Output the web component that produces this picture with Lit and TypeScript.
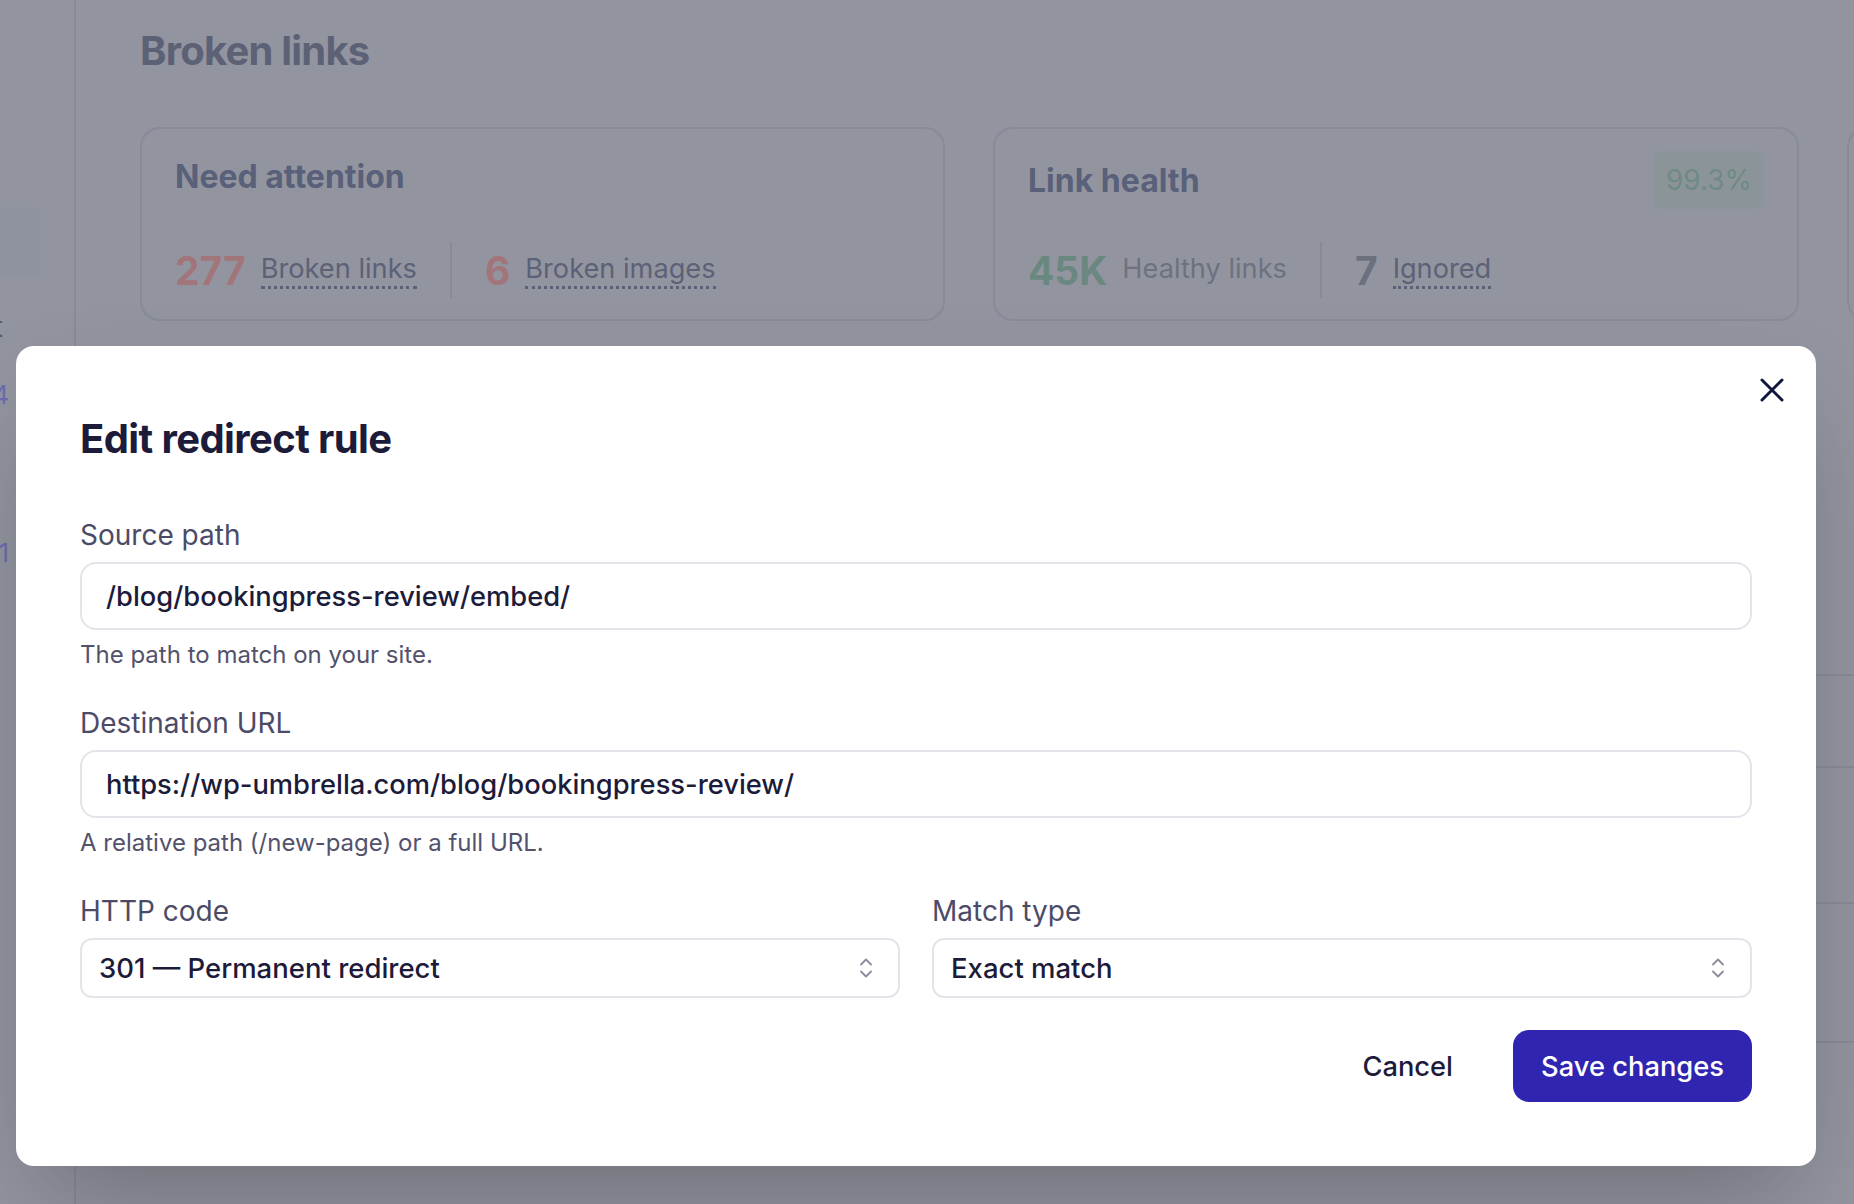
import { LitElement, html, css } from 'lit';
import { customElement } from 'lit/decorators.js';

const chevrons = html`<svg class="chev" viewBox="0 0 12 20" fill="none" stroke="currentColor" stroke-width="1.8" stroke-linecap="round" stroke-linejoin="round"><path d="M1 6.5 6 1.5l5 5"/><path d="M1 13.5l5 5 5-5"/></svg>`;

@customElement('app-root')
export class AppRoot extends LitElement {
  static styles = css`
    :host {
      display: block;
      font-family: Inter, 'Noto Sans', sans-serif;
    }
    .page {
      position: relative;
      display: flex;
      height: 1204px;
      overflow: hidden;
      background: #92959f;
    }

    /* sidebar is cut off by the left edge */
    .side {
      flex: none;
      width: 76px;
      box-sizing: border-box;
      padding-top: 207px;
      border-right: 2px solid #888b96;
      overflow: hidden;
      display: flex;
      flex-direction: column;
      align-items: flex-start;
    }
    .side-active {
      width: 41px;
      height: 70px;
      background: #8e939f;
      border-radius: 0 6px 6px 0;
    }
    .side-row {
      width: 3px;
      display: flex;
      justify-content: flex-end;
      white-space: nowrap;
      font-size: 28px;
      line-height: 34px;
      color: #565a6c;
      margin-top: 33px;
    }
    .side-count {
      width: 9px;
      color: #6a6cb0;
      font-size: 26px;
      line-height: 30px;
      margin-top: 36px;
    }
    .side-count.one {
      margin-top: 128px;
    }

    .main {
      flex: 1;
      min-width: 0;
      padding-left: 64px;
    }
    h1 {
      margin: 26px 0 0;
      font-size: 40px;
      line-height: 50px;
      font-weight: 650;
      letter-spacing: -0.8px;
      color: #5d6176;
    }
    .cards {
      display: grid;
      grid-template-columns: 805px 806px 804px;
      gap: 48px;
      margin-top: 51px;
    }
    .card {
      box-sizing: border-box;
      height: 194px;
      padding: 22px 33px 21px;
      border: 2px solid #888b97;
      border-radius: 20px;
      display: flex;
      flex-direction: column;
    }
    .head {
      display: flex;
      align-items: center;
      justify-content: space-between;
    }
    .head.plain {
      padding-top: 2px;
    }
    .head h2 {
      margin: 0;
      padding-top: 2px;
      font-size: 32px;
      line-height: 44px;
      font-weight: 650;
      color: #596079;
    }
    .badge {
      padding: 0 12px;
      height: 58px;
      display: flex;
      align-items: center;
      background: #8b9599;
      border-radius: 8px;
      font-size: 28px;
      color: #6f8a85;
    }
    .stats {
      margin-top: auto;
      height: 56px;
      display: flex;
      align-items: center;
    }
    .stat {
      display: flex;
      align-items: center;
      gap: 15px;
    }
    .stat + .stat {
      margin-left: 33px;
      padding-left: 33px;
      border-left: 2px solid #888b96;
      height: 56px;
    }
    .num {
      font-size: 39px;
      font-weight: 700;
      color: #6c6f7e;
    }
    .num.red {
      color: #a2757b;
    }
    .num.green {
      color: #6a887f;
    }
    .stat-label {
      font-size: 27.2px;
      line-height: 34px;
      color: #5c6178;
      border-bottom: 3px dotted #5c6178;
    }
    .stat-label.plain {
      color: #6e7180;
      border-bottom-color: transparent;
    }

    .rows {
      margin-top: 353px;
    }
    .rows div {
      border-top: 2px solid #888b96;
    }

    /* dialog */
    .modal {
      position: absolute;
      left: 16px;
      top: 346px;
      width: 1800px;
      box-sizing: border-box;
      padding: 71px 64px 64px 64px;
      background: #fff;
      border-radius: 18px;
      box-shadow: 0 50px 100px -24px rgba(0, 0, 0, 0.25);
      color: #1d1b3a;
    }
    .close {
      position: absolute;
      right: 32px;
      top: 32px;
      width: 24px;
      height: 24px;
      color: #10183f;
    }
    .close svg {
      display: block;
      width: 24px;
      height: 24px;
    }
    .title {
      margin: 0 0 54px;
      font-size: 40px;
      line-height: 44px;
      font-weight: 650;
      letter-spacing: -0.6px;
    }
    .field + .field {
      margin-top: 32px;
    }
    label {
      display: block;
      font-size: 28px;
      line-height: 40px;
      color: #4c4b67;
      margin-bottom: 7px;
    }
    .input {
      box-sizing: border-box;
      height: 68px;
      padding: 0 24px;
      display: flex;
      align-items: center;
      border: 2px solid #e4e4ea;
      border-radius: 16px;
      font-size: 27.3px;
      font-weight: 500;
    }
    .hint {
      margin-top: 9px;
      font-size: 24px;
      line-height: 32px;
      color: #53526c;
    }
    .two {
      display: grid;
      grid-template-columns: 1fr 1fr;
      gap: 32px;
      margin-top: 32px;
    }
    .select {
      box-sizing: border-box;
      height: 60px;
      padding: 0 26px 0 17px;
      display: flex;
      align-items: center;
      justify-content: space-between;
      border: 2px solid #e4e4ea;
      border-radius: 12px;
      font-size: 27.5px;
      font-weight: 500;
    }
    .chev {
      width: 12px;
      height: 20px;
      color: #8b8b9e;
    }
    .actions {
      display: flex;
      justify-content: flex-end;
      align-items: center;
      gap: 32px;
      margin-top: 32px;
    }
    button {
      font: inherit;
      font-size: 27.3px;
      font-weight: 500;
      border: 0;
      background: none;
      color: inherit;
      height: 72px;
      padding: 0 28px;
      border-radius: 16px;
    }
    button.primary {
      width: 239px;
      padding: 0;
      background: #3025b1;
      color: #fff;
    }
  `;

  render() {
    return html`
      <div class="page">
        <aside class="side">
          <div class="side-active"></div>
          <div class="side-row">Audit</div>
          <div class="side-row side-count">14</div>
          <div class="side-row side-count one">21</div>
        </aside>
        <main class="main">
          <h1>Broken links</h1>
          <section class="cards">
            <div class="card">
              <div class="head plain"><h2>Need attention</h2></div>
              <div class="stats">
                <div class="stat"><span class="num red">277</span><span class="stat-label">Broken links</span></div>
                <div class="stat"><span class="num red">6</span><span class="stat-label">Broken images</span></div>
              </div>
            </div>
            <div class="card">
              <div class="head"><h2>Link health</h2><span class="badge">99.3%</span></div>
              <div class="stats">
                <div class="stat"><span class="num green">45K</span><span class="stat-label plain">Healthy links</span></div>
                <div class="stat"><span class="num">7</span><span class="stat-label">Ignored</span></div>
              </div>
            </div>
            <div class="card"></div>
          </section>
          <div class="rows">
            <div style="height: 90px"></div>
            <div style="height: 134px"></div>
            <div style="height: 137px"></div>
            <div></div>
          </div>
        </main>

        <div class="modal" role="dialog">
          <div class="close">
            <svg viewBox="0 0 24 24" fill="none" stroke="currentColor" stroke-width="3" stroke-linecap="round"><path d="M2 2l20 20M22 2 2 22"/></svg>
          </div>
          <h3 class="title">Edit redirect rule</h3>
          <div class="field">
            <label>Source path</label>
            <div class="input">/blog/bookingpress-review/embed/</div>
            <div class="hint">The path to match on your site.</div>
          </div>
          <div class="field">
            <label>Destination URL</label>
            <div class="input">https://wp-umbrella.com/blog/bookingpress-review/</div>
            <div class="hint">A relative path (/new-page) or a full URL.</div>
          </div>
          <div class="two">
            <div>
              <label>HTTP code</label>
              <div class="select"><span>301 — Permanent redirect</span>${chevrons}</div>
            </div>
            <div>
              <label>Match type</label>
              <div class="select"><span>Exact match</span>${chevrons}</div>
            </div>
          </div>
          <div class="actions">
            <button>Cancel</button>
            <button class="primary">Save changes</button>
          </div>
        </div>
      </div>
    `;
  }
}
